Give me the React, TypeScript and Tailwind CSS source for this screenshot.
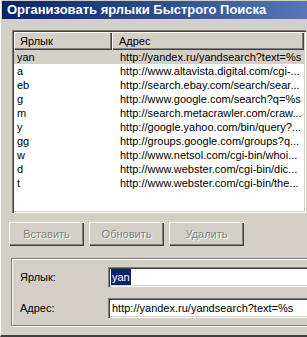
import React from "react";

const rows = [
  { key: "yan", url: "http://yandex.ru/yandsearch?text=%s" },
  { key: "a", url: "http://www.altavista.digital.com/cgi-..." },
  { key: "eb", url: "http://search.ebay.com/search/sear..." },
  { key: "g", url: "http://www.google.com/search?q=%s" },
  { key: "m", url: "http://search.metacrawler.com/craw..." },
  { key: "y", url: "http://google.yahoo.com/bin/query?..." },
  { key: "gg", url: "http://groups.google.com/groups?q..." },
  { key: "w", url: "http://www.netsol.com/cgi-bin/whoi..." },
  { key: "d", url: "http://www.webster.com/cgi-bin/dic..." },
  { key: "t", url: "http://www.webster.com/cgi-bin/the..." },
];

const sunken =
  "shadow-[inset_1px_1px_0_#808080,inset_2px_2px_0_#404040,inset_-1px_-1px_0_#ffffff,inset_-2px_-2px_0_#d4d0c8]";
const raised =
  "shadow-[inset_1px_1px_0_#ffffff,inset_-1px_-1px_0_#404040,inset_-2px_-2px_0_#808080]";

function Btn({ label }: { label: string }) {
  return (
    <div
      className={`w-[75px] h-[24px] flex items-center justify-center text-[#808080] [text-shadow:1px_1px_0_#ffffff] ${raised}`}
    >
      {label}
    </div>
  );
}

export default function App() {
  return (
    <div
      className="w-[307px] h-[337px] bg-[#d4d0c8] overflow-hidden flex flex-col text-[11px] text-black border-l border-l-white border-b-2 border-b-[#404040]"
      style={{ fontFamily: '"Liberation Sans", Arial, sans-serif' }}
    >
      {/* TITLE BAR */}
      <div className="mt-[1px] ml-[1px] h-[18px] flex items-center pl-[5px] bg-gradient-to-r from-[#0a246a] via-[#2c4c8c] to-[#5677b4] text-white font-bold text-[13px]">
        Организовать ярлыки Быстрого Поиска
      </div>

      {/* LIST */}
      <div className={`mt-[11px] ml-[11px] w-[294px] h-[183px] p-[2px] bg-white ${sunken}`}>
        <div className="flex h-[18px] bg-[#d4d0c8]">
          <div className={`w-[98px] pl-[6px] flex items-center ${raised}`}>Ярлык</div>
          <div className={`flex-1 pl-[7px] flex items-center ${raised}`}>Адрес</div>
        </div>
        {rows.map((r, i) => (
          <div
            key={r.key}
            className={`flex h-[14px] items-center whitespace-nowrap overflow-hidden ${i === 0 ? "bg-[#d4d0c8]" : ""}`}
          >
            <div className="w-[98px] pl-[3px]">{r.key}</div>
            <div className="flex-1 pl-[8px] overflow-hidden">{r.url}</div>
          </div>
        ))}
      </div>

      {/* BUTTONS */}
      <div className="mt-[9px] ml-[8px] flex gap-[5px]">
        <Btn label="Вставить" />
        <Btn label="Обновить" />
        <Btn label="Удалить" />
      </div>

      {/* EDIT GROUP */}
      <div className="mt-[12px] ml-[10px] w-[320px] shrink-0 h-[68px] border border-[#808080] shadow-[inset_1px_1px_0_#ffffff,1px_1px_0_#ffffff] flex flex-col gap-[11px] pt-[8px] pl-[8px]">
        <div className="flex items-center h-[20px]">
          <div className="w-[88px]">Ярлык:</div>
          <div className={`flex-1 h-[20px] bg-white pl-[3px] flex items-center ${sunken}`}>
            <span className="bg-[#0a246a] text-white px-[1px]">yan</span>
          </div>
        </div>
        <div className="flex items-center h-[20px]">
          <div className="w-[88px]">Адрес:</div>
          <div className={`flex-1 h-[20px] bg-white pl-[4px] flex items-center ${sunken}`}>
            http://yandex.ru/yandsearch?text=%s
          </div>
        </div>
      </div>
    </div>
  );
}
